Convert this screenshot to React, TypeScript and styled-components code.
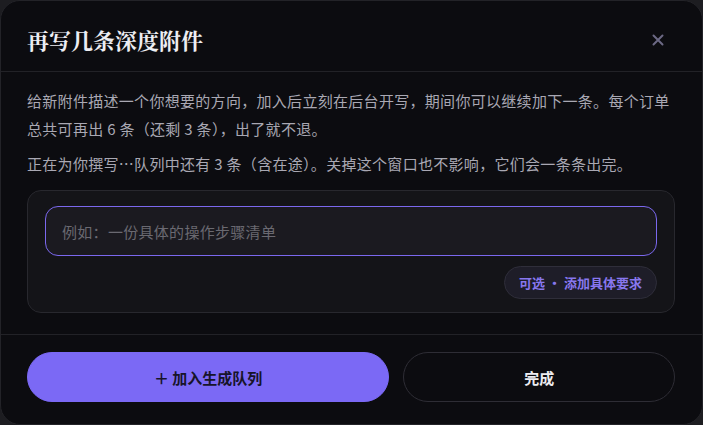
import React from "react";
import styled, { createGlobalStyle } from "styled-components";

const Global = createGlobalStyle`
  html, body { margin: 0; padding: 0; background: #1d1d21; }
  body { font-family: "Noto Sans CJK SC", "Noto Sans", sans-serif; }
  * { box-sizing: border-box; }
`;

const Modal = styled.div`
  width: 703px;
  height: 425px;
  background: #0c0c10;
  border: 1px solid #232328;
  border-radius: 20px;
  display: flex;
  flex-direction: column;
  overflow: hidden;
`;

const Header = styled.div`
  display: flex;
  align-items: center;
  justify-content: space-between;
  padding: 25px 32px 17px 26px;
  border-bottom: 1px solid #222227;
`;

const Title = styled.h2`
  margin: 0;
  font-family: "Noto Serif CJK SC", "Noto Serif", serif;
  font-size: 22px;
  line-height: 28px;
  font-weight: 700;
  color: #ededf2;
`;

const CloseBtn = styled.button`
  width: 24px;
  height: 24px;
  padding: 0;
  border: none;
  background: transparent;
  display: flex;
  align-items: center;
  justify-content: center;
  color: #6c6984;
  cursor: pointer;
`;

const Body = styled.div`
  padding: 15px 27px 21px 26px;
  border-bottom: 1px solid #222227;
`;

const Para = styled.p<{ $gap?: number }>`
  margin: 0 0 ${(p) => p.$gap ?? 0}px;
  font-size: 15px;
  line-height: 28px;
  letter-spacing: 0.3px;
  color: #a9a8b3;
`;

const Card = styled.div`
  background: #141418;
  border: 1px solid #28282e;
  border-radius: 14px;
  padding: 15px 17px 13px;
  display: flex;
  flex-direction: column;
  gap: 10px;
`;

const Input = styled.input`
  height: 50px;
  width: 100%;
  background: #1b1a20;
  border: 1px solid #7b68ee;
  border-radius: 13px;
  padding: 0 16px;
  font-family: "Noto Sans CJK SC", "Noto Sans", sans-serif;
  font-size: 15px;
  letter-spacing: 0.3px;
  color: #e6e6ea;
  outline: none;
  caret-color: #ffffff;
  &::placeholder { color: #6a6971; }
`;

const ChipRow = styled.div`
  display: flex;
  justify-content: flex-end;
`;

const Chip = styled.button`
  height: 33px;
  padding: 0 14px;
  border-radius: 17px;
  background: #1e1d28;
  border: 1px solid #2f2e3a;
  color: #8877ee;
  font-family: "Noto Sans CJK SC", "Noto Sans", sans-serif;
  font-size: 13px;
  font-weight: 700;
`;

const Footer = styled.div`
  display: grid;
  grid-template-columns: 4fr 3fr;
  gap: 14px;
  padding: 17px 27px 22px 26px;
`;

const Btn = styled.button<{ $primary?: boolean }>`
  height: 50px;
  border-radius: 25px;
  font-family: "Noto Sans CJK SC", "Noto Sans", sans-serif;
  font-size: 15px;
  font-weight: 700;
  cursor: pointer;
  background: ${(p) => (p.$primary ? "#7b69f5" : "transparent")};
  border: 1px solid ${(p) => (p.$primary ? "#7b69f5" : "#2e2d35")};
  color: ${(p) => (p.$primary ? "#17142a" : "#ececf0")};
`;

export default function App() {
  return (
    <>
      <Global />
      <Modal>
        <Header>
          <Title>再写几条深度附件</Title>
          <CloseBtn aria-label="关闭">
            <svg width="12" height="12" viewBox="0 0 12 12">
              <path d="M1.5 1.5 L10.5 10.5 M10.5 1.5 L1.5 10.5" stroke="currentColor" strokeWidth="2" strokeLinecap="round" />
            </svg>
          </CloseBtn>
        </Header>
        <Body>
          <Para $gap={7}>
            给新附件描述一个你想要的方向，加入后立刻在后台开写，期间你可以继续加下一条。每个订单总共可再出 6 条（还剩 3 条），出了就不退。
          </Para>
          <Para $gap={12}>
            正在为你撰写…队列中还有 3 条（含在途）。关掉这个窗口也不影响，它们会一条条出完。
          </Para>
          <Card>
            <Input autoFocus placeholder="例如：一份具体的操作步骤清单" />
            <ChipRow>
              <Chip>可选 · 添加具体要求</Chip>
            </ChipRow>
          </Card>
        </Body>
        <Footer>
          <Btn $primary>＋ 加入生成队列</Btn>
          <Btn>完成</Btn>
        </Footer>
      </Modal>
    </>
  );
}
